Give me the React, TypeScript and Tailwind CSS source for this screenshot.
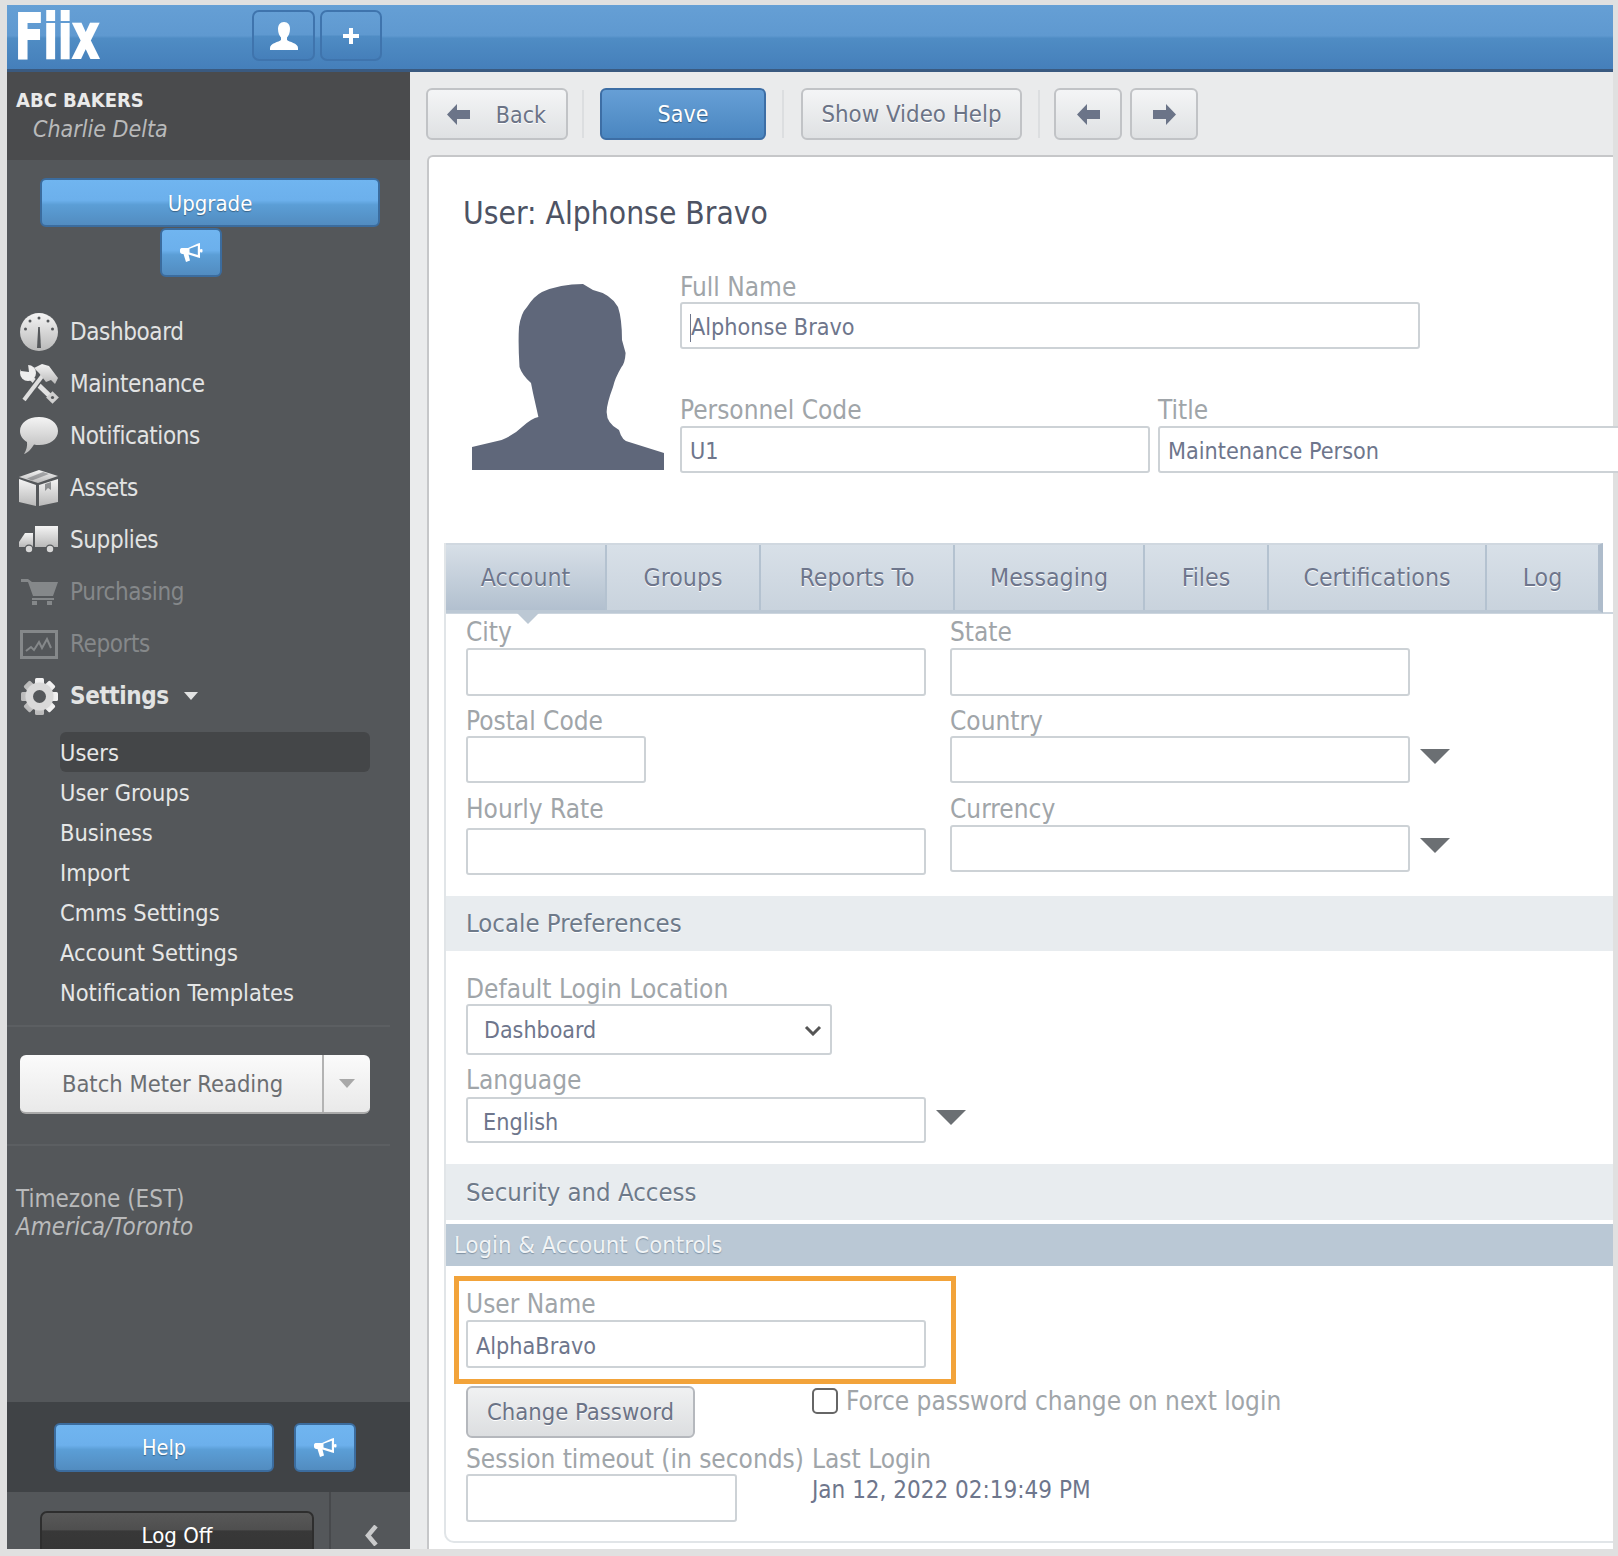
import type { ReactNode } from 'react';

const blueBtn =
  'bg-[linear-gradient(#70b5f0_0%,#6cb0ec_45%,#5b9ed6_55%,#528cc0_100%)] border-2 border-[#3b6c9e] rounded-[6px] text-white flex items-center justify-center [text-shadow:0_1px_1px_rgba(0,0,0,0.35)]';
const topBtn =
  'bg-[linear-gradient(#659fd5_0%,#5f99d0_48%,#4f8cc4_52%,#457fba_100%)] border-2 border-[#3f74ad] rounded-[7px] flex items-center justify-center h-[51px]';
const grayBtn =
  'h-[52px] bg-[linear-gradient(#f4f5f6,#dfe1e3)] border-2 border-[#c1c3c6] rounded-[6px] text-[#6b7386] flex items-center justify-center [text-shadow:0_1px_0_#fff]';
const sep = 'w-[2px] h-[48px] bg-[#dcdee0] mt-[2px]';
const labelCls = 'h-[24px] leading-[24px] text-[26px] text-[#a0a5a9] whitespace-nowrap';
const inputCls =
  'bg-white border-2 border-[#cdd2d6] rounded-[3px] text-[23.2px] text-[#6e768c] flex items-center pl-[8px] pr-[9px] pt-[4px] whitespace-nowrap overflow-hidden';
const bandCls = 'h-[56px] bg-[#e8ecef] flex items-center pl-[20px] text-[25.5px] text-[#6e7a8a] [text-shadow:0_1px_0_#fff]';

function Field({ label, className, value, gap, caret, cursor }: { label: string; className: string; value?: string; gap: string; caret?: boolean; cursor?: boolean }) {
  return (
    <div>
      <div className={labelCls}>{label}</div>
      <div className={`flex ${gap}`}>
        <div className={`${inputCls} ${className}`}>
          {cursor && <span className="w-[1px] h-[28px] bg-[#6e768c] shrink-0" />}
          {value}
        </div>
        {caret && <Caret />}
      </div>
    </div>
  );
}

function Caret() {
  return (
    <svg width="30" height="15" viewBox="0 0 30 15" className="ml-[10px] mt-[13px] shrink-0">
      <path d="M0 0H30L15 15Z" fill="#6b6f73" />
    </svg>
  );
}

function Arrow({ left }: { left?: boolean }) {
  return (
    <svg width="23" height="21" viewBox="0 0 23 21" className={left ? '' : 'scale-x-[-1]'}>
      <path d="M0 10.500L10 0V6H23V15H10V21Z" fill="#6b7488" />
    </svg>
  );
}

function Megaphone() {
  return (
    <svg width="24" height="21" viewBox="0 0 24 21">
      <path d="M1 8C1 6.500 2 6 3.500 6H9L19 1.500L21 1V16L19 15.500L9.500 12.500L11 18.500L7 20L4.500 12H3.500C2 12 1 11 1 9.500Z" fill="#fff" />
      <path d="M10.500 6.800L18.800 3.800V13L10.500 10.600Z" fill="#5d9fd8" />
      <rect x="21" y="7" width="2.500" height="3.500" rx="1" fill="#fff" />
    </svg>
  );
}

function NavIcon({ name, dim }: { name: string; dim?: boolean }) {
  const fill = dim ? '#85888a' : 'url(#ico)';
  const bg = '#54575a';
  if (name === 'gauge')
    return (
      <svg width="38" height="40" viewBox="0 0 38 40">
        <circle cx="19" cy="20" r="19" fill={fill} />
        <path d="M17 36L18.200 15H19.800L21 36Z" fill="#55585b" />
        <circle cx="19" cy="6" r="1.500" fill="#55585b" />
        <circle cx="10" cy="9" r="1.500" fill="#55585b" />
        <circle cx="28" cy="9" r="1.500" fill="#55585b" />
        <circle cx="5.500" cy="17" r="1.500" fill="#55585b" />
        <circle cx="32.500" cy="17" r="1.500" fill="#55585b" />
      </svg>
    );
  if (name === 'tools')
    return (
      <svg width="40" height="40" viewBox="0 0 40 40">
        <path d="M9 11L34 35" stroke="#e2e2e2" strokeWidth="5" />
        <circle cx="9" cy="9" r="8" fill="#eee" />
        <path d="M1 0H9L10 8L2 7Z" fill={bg} />
        <rect x="29" y="29" width="9" height="9" transform="rotate(45 33.500 33.500)" fill="#d0d0d0" />
        <circle cx="33.500" cy="33.500" r="1.600" fill={bg} />
        <path d="M5 36L24 11" stroke={bg} strokeWidth="7" />
        <path d="M5 36L24 11" stroke="#dedede" strokeWidth="4" />
        <path d="M15 4L23 0L30 2L39 14L36 20L32 16L27 18L20 9Z" fill={fill} />
      </svg>
    );
  if (name === 'bubble')
    return (
      <svg width="40" height="38" viewBox="0 0 40 38">
        <path d="M20 0C31 0 39 6 39 14C39 22 31 28 20 28C18 28 16.500 28 15 27.500C13 31 9 36 5 37C7.500 33 8.500 29 8 25C3.500 22.500 1 18.500 1 14C1 6 9 0 20 0Z" fill={fill} />
      </svg>
    );
  if (name === 'box')
    return (
      <svg width="40" height="36" viewBox="0 0 40 36">
        <path d="M0 9L17 15V36L0 32Z" fill={fill} />
        <path d="M20 15L39 9V32L20 36Z" fill={fill} />
        <path d="M0 7L20 0L39 6L19 13Z" fill={fill} />
        <path d="M24 2L30 4L13 10.500L8 8.500Z" fill={bg} opacity="0.45" />
        <path d="M26 14L32 12V20L29 18L26 21Z" fill={bg} opacity="0.6" />
      </svg>
    );
  if (name === 'truck')
    return (
      <svg width="40" height="28" viewBox="0 0 40 28">
        <path d="M16 0H39V21H16Z" fill={fill} />
        <path d="M14 7V21H0V16L6 7Z" fill={fill} />
        <circle cx="10" cy="23" r="4.500" fill={bg} />
        <circle cx="10" cy="23" r="3.200" fill="#d8d8d8" />
        <circle cx="31" cy="23" r="4.500" fill={bg} />
        <circle cx="31" cy="23" r="3.200" fill="#d8d8d8" />
      </svg>
    );
  if (name === 'cart')
    return (
      <svg width="37" height="26" viewBox="0 0 37 26">
        <path d="M0 0H7L11 3H37L32 17H12L7 3H0Z" fill={fill} />
        <path d="M11 19H33V21H11Z" fill={fill} />
        <rect x="11" y="22" width="5" height="4" fill={fill} />
        <rect x="26" y="22" width="5" height="4" fill={fill} />
      </svg>
    );
  if (name === 'chart')
    return (
      <svg width="38" height="29" viewBox="0 0 38 29">
        <rect x="1.500" y="1.500" width="35" height="26" fill="none" stroke={fill} strokeWidth="3" />
        <path d="M6 21L11 17L14 20L19 12L22 18L27 9L31 18" fill="none" stroke={fill} strokeWidth="2" />
      </svg>
    );
  return (
    <svg width="37" height="37" viewBox="0 0 37 37">
      {[0, 45, 90, 135].map((a) => (
        <rect key={a} x="14" y="0" width="9" height="37" rx="1.500" fill={fill} transform={`rotate(${a} 18.500 18.500)`} />
      ))}
      <circle cx="18.500" cy="18.500" r="14" fill="#d9d9d9" />
      <circle cx="18.500" cy="18.500" r="6.500" fill={bg} />
    </svg>
  );
}

function NavItem({ icon, children, dim, bold }: { icon: string; children: ReactNode; dim?: boolean; bold?: boolean }) {
  return (
    <div className="h-[52px] flex items-center">
      <div className="w-[40px] h-[40px] ml-[12px] flex items-center justify-center">
        <NavIcon name={icon} dim={dim} />
      </div>
      <span className={`ml-[11px] text-[24px] tracking-[-0.4px] ${dim ? 'text-[#85888a]' : 'text-[#e2e3e3]'} ${bold ? 'font-bold' : ''}`}>{children}</span>
      {bold && (
        <svg width="14" height="8" viewBox="0 0 14 8" className="ml-[15px]">
          <path d="M0 0H14L7 8Z" fill="#e2e3e3" />
        </svg>
      )}
    </div>
  );
}

const subItems = ['Users', 'User Groups', 'Business', 'Import', 'Cmms Settings', 'Account Settings', 'Notification Templates'];
const tabs = [
  ['Account', 'w-[161px]'],
  ['Groups', 'w-[154px]'],
  ['Reports To', 'w-[194px]'],
  ['Messaging', 'w-[190px]'],
  ['Files', 'w-[124px]'],
  ['Certifications', 'w-[218px]'],
  ['Log', 'w-[111px]'],
];

export default function App() {
  return (
    <div className="w-[1618px] h-[1556px] bg-[#e0e0e0] pt-[5px] pl-[7px] pr-[5px] pb-[7px] overflow-hidden font-[family-name:'DejaVu_Sans_Condensed','DejaVu_Sans',sans-serif]">
      <svg className="absolute w-0 h-0">
        <defs>
          <linearGradient id="ico" x1="0" y1="0" x2="0" y2="1">
            <stop offset="0" stopColor="#f4f4f4" />
            <stop offset="1" stopColor="#b9b9b9" />
          </linearGradient>
        </defs>
      </svg>

      <header className="h-[67px] flex bg-[linear-gradient(#659fd5_0%,#5f99d0_48%,#4f8cc4_52%,#457fba_100%)] border-b-[3px] border-[#3a5a80]">
        <div className="w-[245px]">
          <span className="block origin-left scale-x-[0.75] ml-[8px] text-[62px] leading-[63px] font-bold text-white [-webkit-text-stroke:2px_white]">Fiix</span>
        </div>
        <div className="flex gap-[5px] mt-[5px]">
          <div className={`${topBtn} w-[63px]`}>
            <svg width="28" height="28" viewBox="0 0 28 28">
              <path d="M14 0C18 0 20 3 20 7C20 11 18.500 14 17 15.500V18C19 20 28 21 28 26V28H0V26C0 21 9 20 11 18V15.500C9.500 14 8 11 8 7C8 3 10 0 14 0Z" fill="#fff" />
            </svg>
          </div>
          <div className={`${topBtn} w-[62px]`}>
            <svg width="16" height="16" viewBox="0 0 16 16">
              <path d="M6 0H10V6H16V10H10V16H6V10H0V6H6Z" fill="#fff" />
            </svg>
          </div>
        </div>
      </header>

      <div className="flex h-[1477px]">
        <aside className="w-[403px] shrink-0 bg-[#54575a] flex flex-col">
          <div className="h-[88px] bg-[#4a4b4d] pl-[9px] pt-[15px]">
            <div className="text-[20px] leading-[26px] font-bold text-[#eaeaea]">ABC BAKERS</div>
            <div className="text-[23px] leading-[30px] italic text-[#b9babb] ml-[17px] mt-[1px]">Charlie Delta</div>
          </div>
          <div className={`${blueBtn} w-[340px] h-[49px] ml-[33px] mt-[18px] text-[22px] pt-[2px]`}>Upgrade</div>
          <div className={`${blueBtn} w-[62px] h-[49px] ml-[153px] mt-[1px]`}>
            <Megaphone />
          </div>
          <nav className="mt-[29px]">
            <NavItem icon="gauge">Dashboard</NavItem>
            <NavItem icon="tools">Maintenance</NavItem>
            <NavItem icon="bubble">Notifications</NavItem>
            <NavItem icon="box">Assets</NavItem>
            <NavItem icon="truck">Supplies</NavItem>
            <NavItem icon="cart" dim>Purchasing</NavItem>
            <NavItem icon="chart" dim>Reports</NavItem>
            <NavItem icon="gear" bold>Settings</NavItem>
          </nav>
          <div className="ml-[53px] w-[310px] mt-[10px]">
            {subItems.map((s, i) => (
              <div key={s} className={`h-[40px] flex items-center pt-[4px] text-[23.4px] text-[#e6e7e7] rounded-[6px] ${i === 0 ? 'bg-[#444648]' : ''}`}>
                {s}
              </div>
            ))}
          </div>
          <div className="w-[383px] h-[2px] bg-[#5c5f62] mt-[13px]" />
          <div className="ml-[13px] mt-[28px] w-[350px] h-[59px] flex rounded-[6px] bg-[linear-gradient(#fbfbfb,#e9e9e9)] border-b-2 border-[#aaa] text-[23.5px] text-[#6b6e72]">
            <div className="w-[304px] flex items-center justify-center pl-[3px] pt-[2px] border-r-2 border-[#b3b3b3]">Batch Meter Reading</div>
            <div className="flex-1 flex items-center justify-center">
              <svg width="16" height="9" viewBox="0 0 16 9"><path d="M0 0H16L8 9Z" fill="#a8a8a8" /></svg>
            </div>
          </div>
          <div className="w-[383px] h-[2px] bg-[#5c5f62] mt-[30px]" />
          <div className="pl-[9px] mt-[39px] text-[24px] leading-[28px] text-[#b9babb]">
            <div>Timezone (EST)</div>
            <div className="italic">America/Toronto</div>
          </div>
          <div className="mt-auto h-[90px] bg-[#404346] flex items-center pl-[47px] gap-[20px]">
            <div className={`${blueBtn} w-[220px] h-[49px] text-[21.5px] pt-[2px]`}>Help</div>
            <div className={`${blueBtn} w-[62px] h-[49px]`}>
              <Megaphone />
            </div>
          </div>
          <div className="h-[57px] flex overflow-hidden">
            <div className="w-[324px] pl-[33px] pt-[19px] border-r-2 border-[#47494c]">
              <div className="h-[60px] w-[274px] rounded-[7px] bg-[linear-gradient(#585858_0%,#4f4f4f_30%,#383838_32%,#333_100%)] border-2 border-[#2e2e2e] text-white text-[22px] text-center leading-[46px]">
                Log Off
              </div>
            </div>
            <div className="flex-1 flex items-center justify-center pt-[30px] pl-[2px]">
              <svg width="14" height="21" viewBox="0 0 14 21">
                <path d="M11 1L3 10.500L11 20" fill="none" stroke="#c9cacb" strokeWidth="4.500" />
              </svg>
            </div>
          </div>
        </aside>

        <main className="flex-1 min-w-0 bg-[#eaebec] flex flex-col">
          <div className="h-[83px] shrink-0 pt-[16px] pl-[16px] flex">
            <div className={`${grayBtn} w-[142px] pl-[19px] pr-[20px] !justify-between text-[23px]`}>
              <Arrow left />
              <span className="pt-[2px]">Back</span>
            </div>
            <div className={`${sep} ml-[14px]`} />
            <div className={`${grayBtn} !bg-[linear-gradient(#669fd6,#4a86c0)] !border-[#3d6ea5] !text-white ![text-shadow:0_1px_1px_rgba(0,0,0,0.35)] w-[166px] ml-[16px] text-[23px]`}>Save</div>
            <div className={`${sep} ml-[16px]`} />
            <div className={`${grayBtn} w-[221px] ml-[17px] text-[23.8px] pt-[2px]`}>Show Video Help</div>
            <div className={`${sep} ml-[16px]`} />
            <div className={`${grayBtn} w-[68px] ml-[14px]`}>
              <Arrow left />
            </div>
            <div className={`${grayBtn} w-[68px] ml-[8px]`}>
              <Arrow />
            </div>
          </div>

          <div className="flex-1 ml-[17px] bg-white border-l-2 border-t-2 border-[#c6c7c9] rounded-tl-[6px]">
            <h1 className="h-[40px] mt-[36px] leading-[40px] pl-[34px] text-[31.5px] text-[#4d5364]">User: Alphonse Bravo</h1>

            <div className="h-[310px] flex pl-[43px]">
              <svg width="192" height="187" viewBox="0 0 192 187" className="mt-[50px] shrink-0">
                <path d="M70 9Q88 1 111 1L121 7Q139 11 146 24Q150 36 150 57L153.600 70Q153 80 149.500 84Q143 95 141 104Q135 120 134.700 128Q134 140 147 147Q150 158 157 159L192 170V187H0V164L29.600 157Q42 152 50 144Q60 135 66.400 134L61 110L59 100Q50 92 47.500 84Q46 60 47 44Q49 30 55 24Q62 13 70 9Z" fill="#5f677a" />
              </svg>
              <div className="ml-[16px] pt-[42px] flex-1 min-w-0">
                <Field label="Full Name" gap="mt-[3px]" className="w-[740px] h-[47px]" value="Alphonse Bravo" cursor />
                <div className="flex mt-[49px] gap-[8px]">
                  <Field label="Personnel Code" gap="mt-[4px]" className="w-[470px] h-[47px]" value="U1" />
                  <Field label="Title" gap="mt-[4px]" className="w-[500px] h-[47px]" value="Maintenance Person" />
                </div>
              </div>
            </div>

            <div className="ml-[15px] h-[1000px] border-l-2 border-b-2 border-[#e1e5e8] rounded-bl-[10px]">
              <div className="h-[71px] border-b-2 border-[#ccd5de]">
                <div className="flex h-[70px] w-[1157px] border-t-2 border-[#d0d8e0] border-b-[3px] border-b-[#bcc8d4] border-r-[5px] border-r-[#aebccb]">
                  {tabs.map(([t, w], i) => (
                    <div
                      key={t}
                      className={`${w} relative flex items-center justify-center text-[24.7px] text-[#6e768c] [text-shadow:0_1px_0_#fff] border-[#b4c2d0] ${i < 6 ? 'border-r-2' : ''} ${i === 0 ? 'bg-[linear-gradient(#d7dfe7,#b2c0cf)]' : 'bg-[linear-gradient(#d8e0e8,#c9d3dd)]'}`}
                    >
                      {t}
                      {i === 0 && (
                        <svg width="22" height="11" viewBox="0 0 22 11" className="absolute top-full left-[71px] mt-[3px] z-10">
                          <path d="M0 0H22L11 11Z" fill="#bcc8d4" />
                        </svg>
                      )}
                    </div>
                  ))}
                </div>
              </div>

              <div className="pl-[20px] pt-[6px]">
                <div className="flex gap-[24px]">
                  <Field label="City" gap="mt-[4px]" className="w-[460px] h-[48px]" />
                  <Field label="State" gap="mt-[4px]" className="w-[460px] h-[48px]" />
                </div>
                <div className="flex mt-[13px] gap-[24px]">
                  <div className="w-[460px]">
                    <Field label="Postal Code" gap="mt-[3px]" className="w-[180px] h-[47px]" />
                  </div>
                  <Field label="Country" gap="mt-[3px]" className="w-[460px] h-[47px]" caret />
                </div>
                <div className="flex mt-[14px] gap-[24px]">
                  <Field label="Hourly Rate" gap="mt-[7px]" className="w-[460px] h-[47px]" />
                  <Field label="Currency" gap="mt-[4px]" className="w-[460px] h-[47px]" caret />
                </div>
              </div>

              <div className={`${bandCls} !h-[55px] mt-[21px]`}>Locale Preferences</div>
              <div className="pl-[20px] pt-[26px]">
                <div className={labelCls}>Default Login Location</div>
                <div className="mt-[3px] w-[366px] h-[51px] bg-white border-2 border-[#cdd2d6] rounded-[3px] flex items-center justify-between pl-[16px] pr-[8px] pt-[2px] text-[23px] text-[#6e768c]">
                  Dashboard
                  <svg width="18" height="11" viewBox="0 0 18 11">
                    <path d="M2 2L9 9L16 2" fill="none" stroke="#555" strokeWidth="3" />
                  </svg>
                </div>
                <div className="mt-[13px]">
                  <Field label="Language" gap="mt-[5px]" className="w-[460px] h-[46px] !pl-[15px]" value="English" caret />
                </div>
              </div>

              <div className={`${bandCls} mt-[21px]`}>Security and Access</div>
              <div className="mt-[4px] h-[42px] bg-[#bac8d5] flex items-center pl-[8px] pt-[2px] text-[23.7px] text-[#f1f4f6] [text-shadow:0_1px_1px_rgba(90,110,130,0.6)]">
                Login &amp; Account Controls
              </div>

              <div className="relative pl-[20px] pt-[26px]">
                <div className="absolute left-[8px] top-[10px] w-[502px] h-[108px] border-[5px] border-[#f2a33a]" />
                <Field label="User Name" gap="mt-[4px]" className="w-[460px] h-[48px]" value="AlphaBravo" />
                <div className="flex mt-[18px]">
                  <div className="w-[346px]">
                    <div className={`${grayBtn} !border-[#b5b8bd] !bg-[linear-gradient(#f0f1f2,#dcdee0)] w-[229px] text-[23.6px] pt-[2px]`}>Change Password</div>
                  </div>
                  <div className="flex items-center h-[26px] mt-[2px]">
                    <div className="w-[26px] h-[26px] border-2 border-[#666] rounded-[5px] bg-white" />
                    <span className="ml-[8px] text-[26px] text-[#a0a5a9]">Force password change on next login</span>
                  </div>
                </div>
                <div className="flex mt-[9px]">
                  <div className="w-[346px]">
                    <Field label="Session timeout (in seconds)" gap="mt-[3px]" className="w-[271px] h-[48px]" />
                  </div>
                  <div>
                    <div className={labelCls}>Last Login</div>
                    <div className="mt-[7px] h-[24px] leading-[24px] text-[24px] text-[#6e768c]">Jan 12, 2022 02:19:49 PM</div>
                  </div>
                </div>
              </div>
            </div>
          </div>
        </main>
      </div>
    </div>
  );
}
